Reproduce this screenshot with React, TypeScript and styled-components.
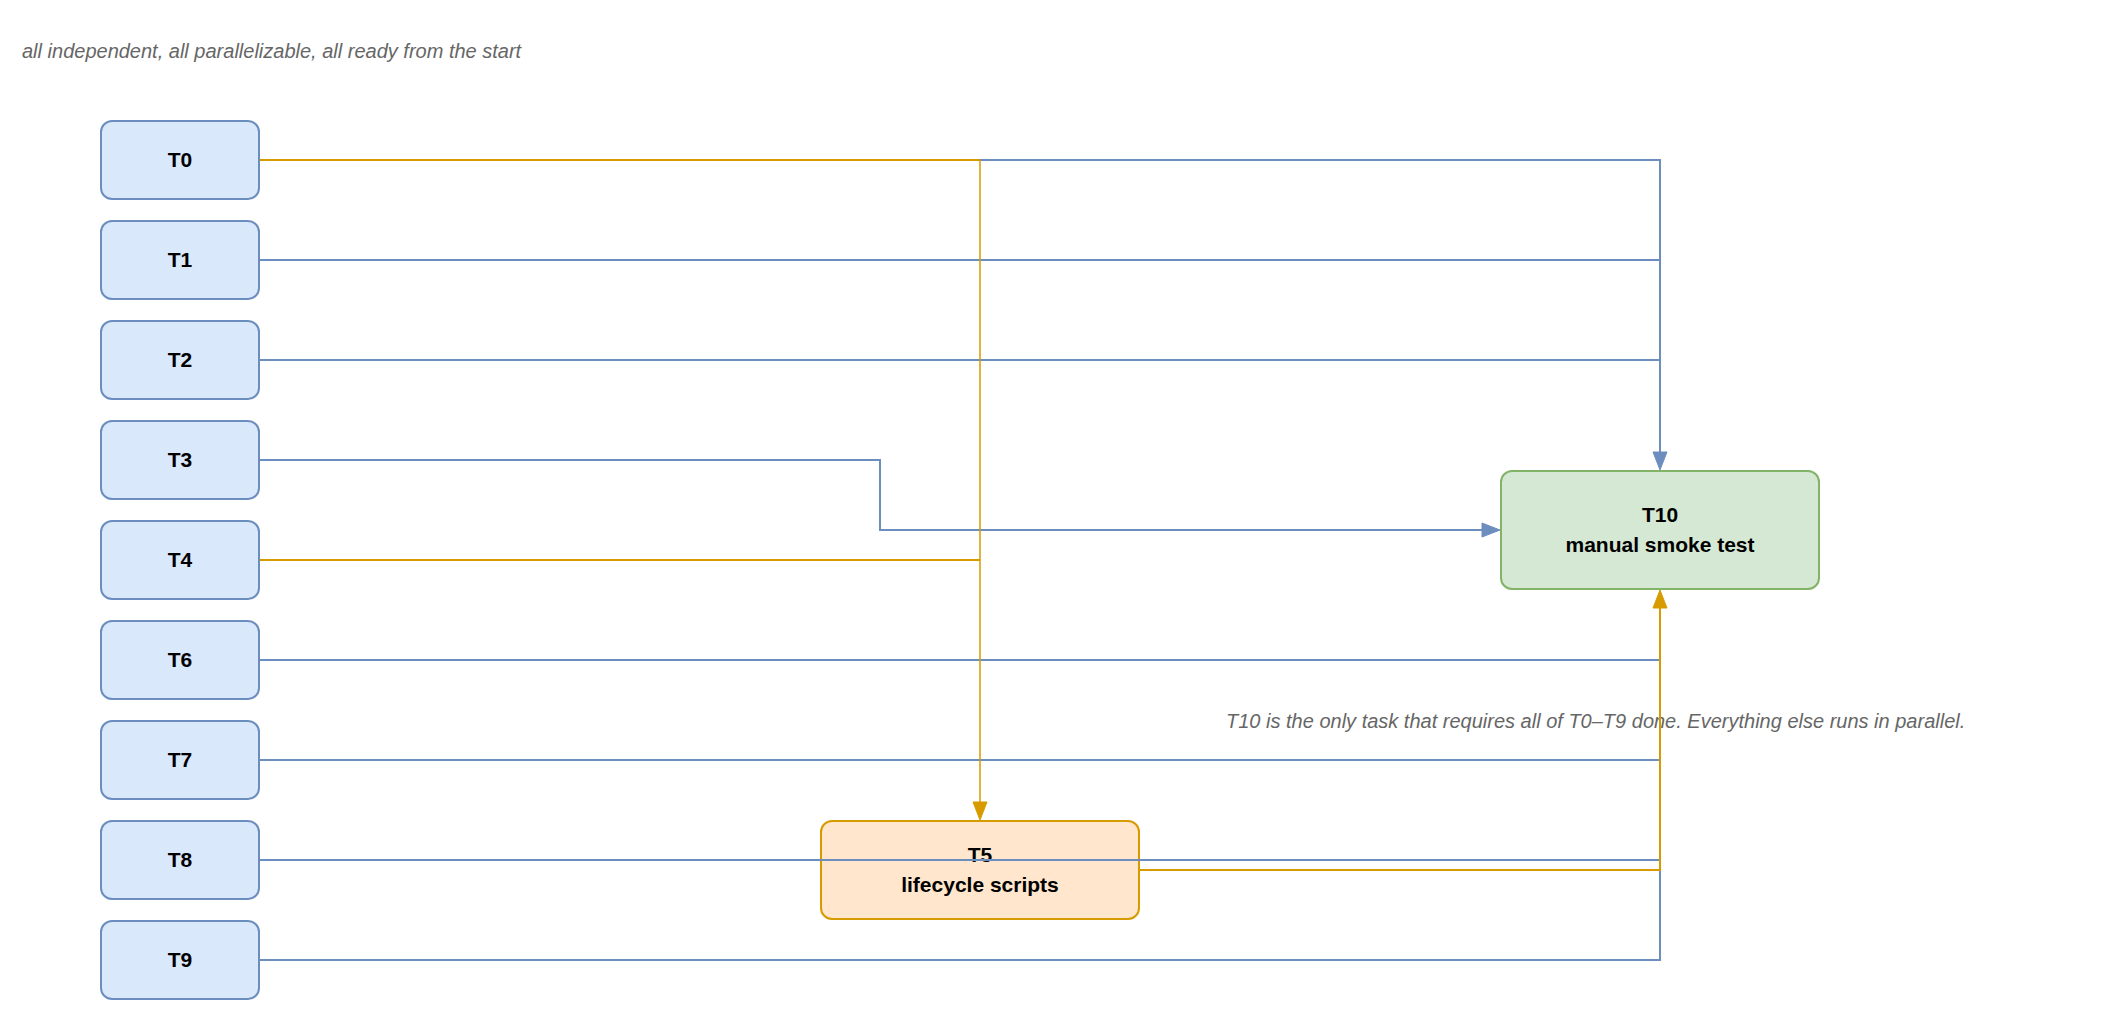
import React from "react";
import styled, { createGlobalStyle } from "styled-components";

const Global = createGlobalStyle`
  html, body { margin: 0; padding: 0; background: #fff; }
  body { font-family: "Liberation Sans", Arial, sans-serif; }
`;

const Canvas = styled.div`
  position: relative;
  width: 2122px;
  height: 1013px;
  overflow: hidden;
  background: #fff;
`;

const Note = styled.div<{ x: number; y: number }>`
  position: absolute;
  left: ${(p) => p.x}px;
  top: ${(p) => p.y}px;
  font-style: italic;
  font-size: 20px;
  color: #666666;
  white-space: nowrap;
  line-height: 24px;
`;

const tones = {
  blue: { fill: "#dae8fc", stroke: "#6c8ebf" },
  green: { fill: "#d5e8d4", stroke: "#82b366" },
  orange: { fill: "#ffe6cc", stroke: "#d79b00" },
};
type Tone = keyof typeof tones;

const Node = styled.div<{ tone: Tone }>`
  position: absolute;
  box-sizing: border-box;
  display: flex;
  flex-direction: column;
  align-items: center;
  justify-content: center;
  background: ${(p) => tones[p.tone].fill};
  border: 2px solid ${(p) => tones[p.tone].stroke};
  border-radius: 12px;
  font-weight: bold;
  font-size: 21px;
  line-height: 30px;
  color: #000;
  text-align: center;
`;

const Edges = styled.svg`
  position: absolute;
  left: 0;
  top: 0;
  pointer-events: none;
`;

const BLUE = "#6c8ebf";
const ORANGE = "#d79b00";

const left = [
  ["T0", 120],
  ["T1", 220],
  ["T2", 320],
  ["T3", 420],
  ["T4", 520],
  ["T6", 620],
  ["T7", 720],
  ["T8", 820],
  ["T9", 920],
] as const;

export default function App() {
  return (
    <Canvas>
      <Global />
      <Note x={22} y={39}>all independent, all parallelizable, all ready from the start</Note>
      {left.map(([t, y]) => (
        <Node key={t} tone="blue" style={{ left: 100, top: y, width: 160, height: 80 }}>
          {t}
        </Node>
      ))}
      <Node tone="green" style={{ left: 1500, top: 470, width: 320, height: 120 }}>
        <span>T10</span>
        <span>manual smoke test</span>
      </Node>
      <Node tone="orange" style={{ left: 820, top: 820, width: 320, height: 100 }}>
        <span>T5</span>
        <span>lifecycle scripts</span>
      </Node>
      <Note x={1226} y={709}>
        T10 is the only task that requires all of T0–T9 done. Everything else runs in parallel.
      </Note>
      <Edges width={2122} height={1013}>
        <g fill="none" stroke={BLUE} strokeWidth={2}>
          <polyline points="980,160 1660,160 1660,456" />
          <polyline points="260,260 1660,260" />
          <polyline points="260,360 1660,360" />
          <polyline points="260,460 880,460 880,530 1486,530" />
          <polyline points="260,660 1660,660" />
          <polyline points="260,760 1660,760" />
          <polyline points="260,860 1660,860" />
          <polyline points="260,960 1660,960 1660,604" />
        </g>
        <g fill="none" stroke={ORANGE} strokeWidth={2}>
          <polyline points="260,160 980,160" />
          <polyline points="260,560 980,560" />
          <polyline points="1140,870 1660,870 1660,604" />
        </g>
        <line x1={980} y1={160} x2={980} y2={806} stroke={ORANGE} strokeWidth={1.5} />
        <polygon points="1653,452 1667,452 1660,470" fill={BLUE} stroke={BLUE} strokeWidth={1} />
        <polygon points="1482,523 1482,537 1500,530" fill={BLUE} stroke={BLUE} strokeWidth={1} />
        <polygon points="1653,608 1667,608 1660,590" fill={ORANGE} stroke={ORANGE} strokeWidth={1} />
        <polygon points="973,802 987,802 980,820" fill={ORANGE} stroke={ORANGE} strokeWidth={1} />
      </Edges>
    </Canvas>
  );
}
